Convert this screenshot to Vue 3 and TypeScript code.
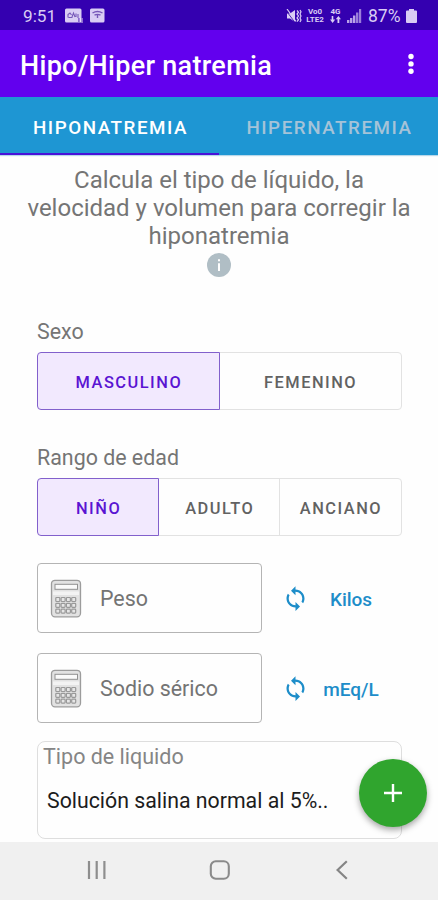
<script setup lang="ts">
import { ref } from 'vue'

const tabs = ['Hiponatremia', 'Hipernatremia']
const activeTab = ref(0)

const sexes = ['Masculino', 'Femenino']
const sex = ref('Masculino')

const ages = ['Niño', 'Adulto', 'Anciano']
const age = ref('Niño')

const fields = [
  { label: 'Peso', unit: 'Kilos' },
  { label: 'Sodio sérico', unit: 'mEq/L' },
]

const keyColumns = [6.3, 11.6, 16.9, 22.2]
const keyRows = [18.5, 24.3, 30.1]
</script>

<template>
  <div class="screen">
    <header class="status">
      <span class="clock">9:51</span>
      <svg class="notice" width="18" height="15" viewBox="0 0 18 15">
        <rect x="0" y="0.5" width="16.5" height="14" rx="1.5" fill="#d9cdf4" />
        <path d="M3 9.500V6.500l2-1.500 1.500 2M7 9l1.500-4L10 9M11 9V5.500M13 6v4M3.500 9.500h4" fill="none" stroke="#7657b8" stroke-width="1.1" />
        <path d="M13 10h5v5h-5z" fill="#8b6bd0" />
        <path d="M15.500 10v4" stroke="#e8defb" stroke-width="1.5" />
      </svg>
      <svg class="notice second" width="15" height="15" viewBox="0 0 15 15">
        <rect x="0" y="0.5" width="14.5" height="14" rx="1.5" fill="#d9cdf4" />
        <path d="M2.500 5q5-3 10 0M4.500 7.200q3-1.600 6 0M7.500 7v3" fill="none" stroke="#7657b8" stroke-width="1.4" />
      </svg>
      <span class="grow"></span>
      <svg class="mute" width="16" height="14" viewBox="0 0 16 14">
        <path d="M1 4.500h3L9 1v12L4 9.500H1z" fill="#d9cdf4" />
        <path d="M0 1.500l9 12" stroke="#3400a8" stroke-width="0.8" />
        <path d="M1 0l9 12.500M11 1.500l1.500 1.700L11 5l1.500 2L11 9l1.500 1.800L11 12.500M14 1l1 1.800L14 5l1 2-1 2 1 2-1 2" fill="none" stroke="#d9cdf4" stroke-width="1.2" />
      </svg>
      <span class="stack volte"><b>Vo0</b><b>LTE2</b></span>
      <span class="stack data">
        <b>4G</b>
        <svg width="11" height="7" viewBox="0 0 11 7">
          <path d="M3.300 0v3.500h1.900L2.600 7 0 3.500h1.700V0zM8.400 0L11 3.300H9.300V7H7.500V3.300H5.800z" fill="#d9cdf4" />
        </svg>
      </span>
      <svg class="signal" width="15" height="14" viewBox="0 0 15 14">
        <path d="M0 11h2.400v3H0zM3 9h2.400v5H3zM6 6.500h2.400V14H6z" fill="#b9a2e8" />
        <path d="M9 3.500h2.400V14H9zM12 0h2.200v14H12z" fill="#9b7edb" />
      </svg>
      <span class="percent">87%</span>
      <svg class="battery" width="11" height="14" viewBox="0 0 11 14">
        <path d="M3 0h5v1.500h2q1 0 1 1V13q0 1-1 1H1q-1 0-1-1V2.500q0-1 1-1h2z" fill="#d9cdf4" />
      </svg>
    </header>

    <div class="appbar">
      <h1>Hipo/Hiper natremia</h1>
      <svg class="more" width="8" height="22" viewBox="0 0 8 22">
        <circle cx="4" cy="3.500" r="2.700" fill="#fff" />
        <circle cx="4" cy="10.900" r="2.700" fill="#fff" />
        <circle cx="4" cy="18.300" r="2.700" fill="#fff" />
      </svg>
    </div>

    <nav class="tabs">
      <button
        v-for="(tab, i) in tabs"
        :key="tab"
        class="tab"
        :class="{ active: activeTab === i }"
        @click="activeTab = i"
      >{{ tab }}</button>
    </nav>

    <main>
      <p class="intro">
        <span>Calcula el tipo de líquido, la</span>
        <span>velocidad y volumen para corregir la</span>
        <span>hiponatremia</span>
      </p>
      <svg class="info" width="24" height="24" viewBox="0 0 24 24">
        <circle cx="12" cy="12" r="12" fill="#b0bec5" />
        <path d="M11 6.200h2v2h-2zM11 10.200h2v7.800h-2z" fill="#fff" />
      </svg>

      <label class="caption sexo">Sexo</label>
      <div class="toggle">
        <button
          v-for="s in sexes"
          :key="s"
          class="option"
          :class="{ on: sex === s }"
          @click="sex = s"
        >{{ s }}</button>
      </div>

      <label class="caption rango">Rango de edad</label>
      <div class="toggle">
        <button
          v-for="a in ages"
          :key="a"
          class="option"
          :class="{ on: age === a }"
          @click="age = a"
        >{{ a }}</button>
      </div>

      <div v-for="f in fields" :key="f.label" class="row">
        <div class="field">
          <svg class="calc" width="32" height="39" viewBox="0 0 32 39">
            <rect x="1.500" y="1.300" width="29" height="36.500" rx="3.500" fill="#e2e2e2" stroke="#9c9c9c" stroke-width="1.300" />
            <rect x="3" y="12.500" width="26" height="3.500" fill="#f3f3f3" />
            <rect x="5" y="5.300" width="22.500" height="5" fill="#fafafa" stroke="#929292" />
            <template v-for="y in keyRows" :key="y">
              <rect
                v-for="x in keyColumns"
                :key="x"
                :x="x - 0.5"
                :y="y"
                width="4"
                height="4"
                rx="0.8"
                fill="#e6e6e6"
                stroke="#999"
                stroke-width="1.200"
              />
            </template>
          </svg>
          <span class="hint">{{ f.label }}</span>
        </div>
        <svg class="sync" width="27" height="27" viewBox="0 0 24 24">
          <path
            d="M12 4V1L8 5l4 4V6c3.310 0 6 2.690 6 6 0 1.010-.25 1.970-.7 2.800l1.460 1.460C19.540 15.030 20 13.570 20 12c0-4.420-3.580-8-8-8zm0 14c-3.310 0-6-2.690-6-6 0-1.010.25-1.970.7-2.800L5.240 7.740C4.460 8.970 4 10.430 4 12c0 4.420 3.580 8 8 8v3l4-4-4-4v3z"
            fill="#1d8dc9"
          />
        </svg>
        <span class="unit">{{ f.unit }}</span>
      </div>

      <section class="card">
        <span class="card-title">Tipo de liquido</span>
        <span class="card-value">Solución salina normal al 5%..</span>
      </section>
    </main>

    <button class="fab">
      <svg width="20" height="20" viewBox="0 0 20 20">
        <path d="M8.800 1h2.400v7.800H19v2.400h-7.800V19H8.800v-7.800H1V8.800h7.800z" fill="#fff" />
      </svg>
    </button>

    <footer class="navbar">
      <svg width="20" height="20" viewBox="0 0 20 20">
        <path d="M2 1v18M9.700 1v18M17.400 1v18" stroke="#8e8e8e" stroke-width="2.200" />
      </svg>
      <svg width="22" height="20" viewBox="0 0 22 20">
        <rect x="1.800" y="1.200" width="18" height="17.600" rx="5" fill="none" stroke="#8a8a8a" stroke-width="2.100" />
      </svg>
      <svg width="20" height="20" viewBox="0 0 20 20">
        <path d="M14.800 1.200L5.600 10l9.200 8.800" fill="none" stroke="#858585" stroke-width="2.200" />
      </svg>
    </footer>
  </div>
</template>

<style>
body {
  background: #fefefe;
}
</style>

<style scoped>
.screen {
  position: relative;
  display: flex;
  flex-direction: column;
  width: 438px;
  height: 900px;
  overflow: hidden;
  background: #fefefe;
  font-family: Roboto, "Liberation Sans", sans-serif;
  white-space: nowrap;
}
button {
  margin: 0;
  padding: 0;
  border: 0;
  background: none;
  font-family: inherit;
}
svg {
  display: block;
  flex: none;
}
.status {
  display: flex;
  flex: none;
  align-items: center;
  box-sizing: border-box;
  height: 30px;
  padding: 1px 21px 0 23px;
  background: #3400b0;
  color: #d9cdf4;
}
.clock {
  width: 42px;
  font-size: 17.200px;
}
.second {
  margin-left: 7px;
}
.grow {
  flex: 1;
}
.mute {
  margin-right: 3px;
}
.stack {
  display: flex;
  flex-direction: column;
  align-items: center;
  font-size: 8px;
  line-height: 8px;
}
.volte {
  width: 20px;
  margin-right: 4px;
}
.data {
  width: 13px;
  margin-right: 5px;
}
.signal {
  margin-right: 6px;
}
.percent {
  width: 34px;
  margin-right: 4px;
  font-size: 17.500px;
}
.appbar {
  display: flex;
  flex: none;
  align-items: center;
  justify-content: space-between;
  box-sizing: border-box;
  height: 67px;
  padding: 4px 23px 0 20px;
  background: #6200ee;
}
h1 {
  margin: 0;
  color: #fff;
  font-size: 27px;
  font-weight: 500;
  letter-spacing: 0.300px;
  line-height: 34px;
}
.more {
  margin-bottom: 4px;
}
.tabs {
  display: flex;
  flex: none;
  height: 58px;
  background: #1e96d3;
  box-shadow: 0 1px 1px #b8d8ea;
}
.tab {
  width: 219px;
  box-sizing: border-box;
  padding: 6px 0 0 2px;
  border-bottom: 2px solid transparent;
  color: #a5c3d8;
  font-size: 18.800px;
  font-weight: 500;
  letter-spacing: 1.550px;
  text-transform: uppercase;
}
.tab.active {
  border-color: #4a12d8;
  color: #fff;
}
main {
  display: flex;
  flex: none;
  flex-direction: column;
  height: 687px;
  box-sizing: border-box;
  padding: 11px 37px 0;
}
.intro {
  display: flex;
  flex-direction: column;
  align-items: center;
  margin: 0;
  color: #757575;
  font-size: 24px;
  line-height: 28px;
}
.info {
  margin: 3px auto 0;
}
.caption {
  color: #757575;
  font-size: 21.400px;
  line-height: 26px;
}
.sexo {
  margin-top: 42px;
}
.rango {
  margin-top: 35px;
}
.toggle {
  display: flex;
  width: 364.500px;
  height: 58px;
  margin-top: 7px;
}
.option {
  flex: 1;
  box-sizing: border-box;
  margin-left: -1px;
  padding: 3px 0 0 1px;
  border: 1px solid #e2e2e2;
  color: #626262;
  font-size: 16.400px;
  font-weight: 500;
  letter-spacing: 1.500px;
  text-transform: uppercase;
}
.option:first-child {
  margin-left: 0;
  border-radius: 4px 0 0 4px;
}
.option:last-child {
  border-radius: 0 4px 4px 0;
}
.option.on {
  z-index: 1;
  border-color: #8260cc;
  background: #f2e9fe;
  color: #5a14d2;
}
.row {
  display: flex;
  align-items: center;
  height: 70px;
  margin-top: 20px;
}
.toggle + .row {
  margin-top: 27px;
}
.field {
  display: flex;
  flex: none;
  align-items: center;
  width: 225px;
  height: 70px;
  box-sizing: border-box;
  padding-left: 12px;
  border: 1.500px solid #b4b4b4;
  border-radius: 4px;
}
.hint {
  margin-left: 18px;
  color: #747474;
  font-size: 21.400px;
}
.sync {
  margin-left: 20px;
}
.unit {
  flex: none;
  width: 80px;
  margin: 3px 0 0 2px;
  color: #1d8dc9;
  font-size: 19px;
  font-weight: 500;
  text-align: center;
}
.card {
  display: flex;
  flex-direction: column;
  width: 365px;
  height: 98px;
  box-sizing: border-box;
  margin-top: 18px;
  padding: 2px 0 0 5px;
  border: 1.500px solid #dedede;
  border-radius: 8px;
}
.card-title {
  color: #858585;
  font-size: 21.500px;
  line-height: 26px;
}
.card-value {
  margin: 18px 0 0 4px;
  color: #1c1c1c;
  font-size: 21.300px;
  line-height: 26px;
}
.fab {
  position: absolute;
  top: 759px;
  left: 359px;
  display: flex;
  align-items: center;
  justify-content: center;
  width: 68px;
  height: 68px;
  border-radius: 50%;
  background: #30a52e;
  box-shadow: 0 3px 6px rgba(0, 0, 0, 0.35);
}
.navbar {
  display: flex;
  flex: none;
  align-items: center;
  justify-content: space-between;
  height: 58px;
  box-sizing: border-box;
  padding: 0 86px 2px 87px;
  background: #f0f0f0;
}
</style>
